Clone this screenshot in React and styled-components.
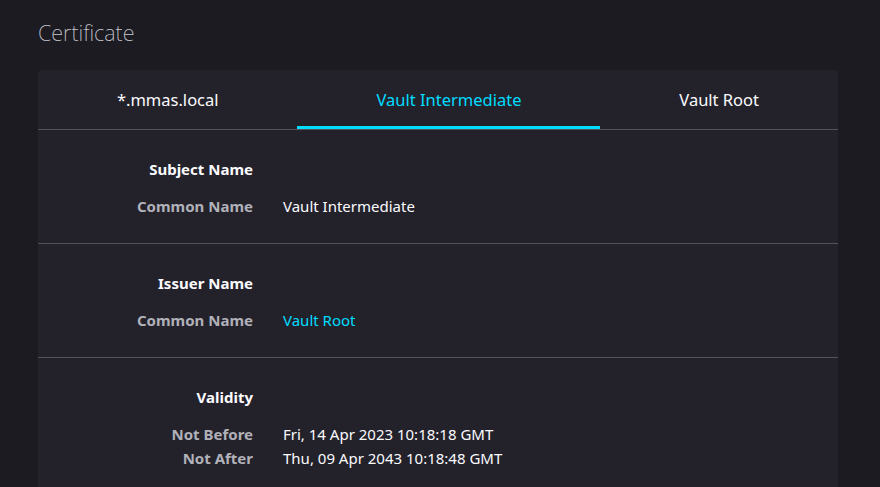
import React from "react";
import styled, { createGlobalStyle } from "styled-components";

const Global = createGlobalStyle`
  html, body { margin: 0; padding: 0; background: #1c1b22; }
  body { font-family: "Noto Sans", "Open Sans", sans-serif; color: #fbfbfe; }
`;

const Page = styled.div`
  padding: 18px 42px 0 38px;
  height: 487px;
  box-sizing: border-box;
  overflow: hidden;
`;

const Title = styled.h1`
  margin: 0 0 22px;
  font-size: 21.6px;
  font-weight: 200;
  line-height: 30px;
  color: #c8c8d0;
`;

const Card = styled.div`
  background: #23222b;
  border-radius: 4px;
  overflow: hidden;
`;

const Tabs = styled.div`
  display: flex;
  border-bottom: 1px solid #52525e;
`;

const Tab = styled.div`
  flex: 1 1 auto;
  height: 59px;
  box-sizing: border-box;
  display: flex;
  align-items: center;
  justify-content: center;
  font-size: 16.5px;
  color: ${(p) => (p.$active ? "#00ddff" : "#fbfbfe")};
  border-bottom: 3px solid ${(p) => (p.$active ? "#00ddff" : "transparent")};
  padding-top: 3px;
  white-space: nowrap;
`;

const Section = styled.div`
  padding: 27px 0 25px;
  border-bottom: 1px solid #52525e;
  display: grid;
  grid-template-columns: 215px 1fr;
  column-gap: 30px;
  font-size: 15px;
  line-height: 24px;
`;

const Heading = styled.div`
  grid-column: 1;
  text-align: right;
  font-weight: 700;
  color: #fbfbfe;
  margin-bottom: 13px;
`;

const Spacer = styled.div``;

const Label = styled.div`
  text-align: right;
  font-weight: 700;
  color: #b1b1b9;
`;

const Value = styled.div`
  color: ${(p) => (p.$link ? "#00ddff" : "#fbfbfe")};
`;

const sections = [
  { title: "Subject Name", rows: [["Common Name", "Vault Intermediate"]] },
  { title: "Issuer Name", rows: [["Common Name", "Vault Root", true]] },
  {
    title: "Validity",
    rows: [
      ["Not Before", "Fri, 14 Apr 2023 10:18:18 GMT"],
      ["Not After", "Thu, 09 Apr 2043 10:18:48 GMT"],
    ],
  },
];

export default function App() {
  return (
    <>
      <Global />
      <Page>
        <Title>Certificate</Title>
        <Card>
          <Tabs>
            <Tab>*.mmas.local</Tab>
            <Tab $active>Vault Intermediate</Tab>
            <Tab>Vault Root</Tab>
          </Tabs>
          {sections.map((s) => (
            <Section key={s.title}>
              <Heading>{s.title}</Heading>
              <Spacer />
              {s.rows.map(([l, v, link]) => (
                <React.Fragment key={l}>
                  <Label>{l}</Label>
                  <Value $link={link}>{v}</Value>
                </React.Fragment>
              ))}
            </Section>
          ))}
        </Card>
      </Page>
    </>
  );
}
